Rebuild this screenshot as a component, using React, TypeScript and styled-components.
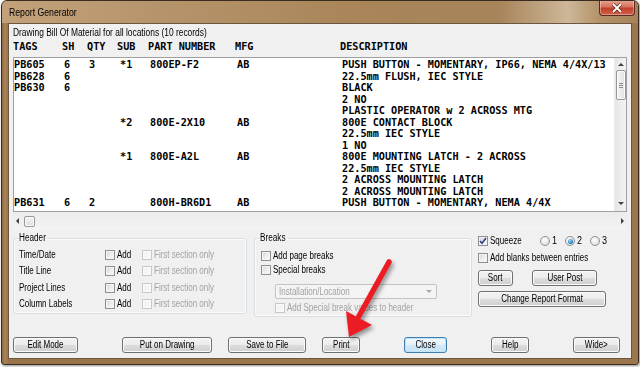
import React from "react";
import styled, { createGlobalStyle } from "styled-components";

const UI_FONT = `"Liberation Sans", Arial, sans-serif`;
const MONO = `"DejaVu Sans Mono", "Liberation Mono", monospace`;

const Global = createGlobalStyle`
  html, body { margin: 0; padding: 0; background: #fff; width: 640px; height: 367px; overflow: hidden; }
  body { font-family: ${UI_FONT}; font-size: 10px; color: #000; }
  * { box-sizing: border-box; }
`;

const Stage = styled.div`
  position: relative;
  width: 640px;
  height: 367px;
`;

const Win = styled.div`
  margin-left: 1px;
  width: 638px;
  height: 365px;
  border: 1px solid #3a2d20;
  border-radius: 6px 6px 3px 3px;
  background: linear-gradient(to right, #8f6a42 0px, #a8835a 3px, #9a7449 6px, #9c774d 100%);
  box-shadow: 1px 1px 3px rgba(0, 0, 0, 0.45);
  display: flex;
  flex-direction: column;
  overflow: hidden;
`;

const TitleBar = styled.div`
  height: 22px;
  flex: none;
  display: flex;
  align-items: flex-start;
  background: linear-gradient(
    to right,
    #c3a27b 0%,
    #b6946b 25%,
    #a98559 55%,
    #a7845a 78%,
    #cdb798 89%,
    #b39268 94%,
    #a7835a 100%
  );
`;

const TitleCell = styled.div`
  flex: 1;
  padding-left: 7px;
`;

const Narrow = styled.span<{ $sx?: number; $origin?: string }>`
  display: inline-block;
  white-space: nowrap;
  transform: scaleX(${(p) => p.$sx ?? 0.8});
  transform-origin: ${(p) => p.$origin ?? "0 50%"};
`;

const TitleText = styled(Narrow)`
  font: 11px/22px ${UI_FONT};
  color: #000;
`;

const CloseBtn = styled.div`
  width: 36px;
  height: 16px;
  margin-right: 3px;
  margin-top: -1px;
  border: 1px solid #5a2a1e;
  border-top: none;
  border-radius: 0 0 4px 4px;
  background: linear-gradient(to bottom, #e8a796 0%, #d9725c 45%, #c2402a 55%, #d0604a 100%);
  box-shadow: inset 0 0 0 1px rgba(255, 255, 255, 0.35);
  display: flex;
  align-items: center;
  justify-content: center;
`;

const Client = styled.div`
  flex: 1;
  margin: 0 6px 5px 6px;
  background: #f0f0f0;
  border: 1px solid #6b5640;
  display: flex;
  flex-direction: column;
  padding: 3px 4px 5px 4px;
`;

const Caption = styled.div`
  font: 10px/11px ${UI_FONT};
  color: #000;
  height: 11px;
`;

const MonoGrid = styled.div<{ $cols: string }>`
  display: grid;
  grid-template-columns: ${(p) => p.$cols};
  font-family: ${MONO};
  font-weight: bold;
  font-size: 10.2px;
  white-space: pre;
  color: #000;
`;

const HeaderRow = styled(MonoGrid)`
  margin-top: 2px;
  height: 12px;
  line-height: 13px;
`;

const ListBox = styled.div`
  margin-top: 5px;
  height: 155px;
  display: flex;
  border: 1px solid #a0a0a0;
  background: #fff;
`;

const ListText = styled.div`
  flex: 1;
  overflow: hidden;
  padding-top: 1px;
`;

const DataRow = styled(MonoGrid)`
  height: 11.5px;
  line-height: 11.5px;
`;

const VScroll = styled.div`
  width: 12px;
  flex: none;
  background: linear-gradient(to right, #e6e6e6, #f3f3f3);
  border-left: 1px solid #ececec;
  display: flex;
  flex-direction: column;
  align-items: center;
  padding: 5px 0 6px 0;
`;

const Arrow = styled.div<{ $dir: "up" | "down" | "left" | "right" }>`
  width: 0;
  height: 0;
  flex: none;
  ${(p) =>
    p.$dir === "up"
      ? "border-left: 3px solid transparent; border-right: 3px solid transparent; border-bottom: 3px solid #404040;"
      : p.$dir === "down"
      ? "border-left: 3px solid transparent; border-right: 3px solid transparent; border-top: 3px solid #404040;"
      : p.$dir === "left"
      ? "border-top: 3px solid transparent; border-bottom: 3px solid transparent; border-right: 3px solid #404040;"
      : "border-top: 3px solid transparent; border-bottom: 3px solid transparent; border-left: 3px solid #404040;"}
`;

const VThumb = styled.div`
  width: 10px;
  height: 30px;
  margin-top: 4px;
  border: 1px solid #979797;
  border-radius: 2px;
  background: linear-gradient(to right, #f4f4f4, #e2e2e2);
  box-shadow: inset 0 0 0 1px #fbfbfb;
  display: flex;
  flex-direction: column;
  align-items: center;
  justify-content: center;
  gap: 1px;
`;

const Grip = styled.div`
  width: 4px;
  height: 1px;
  background: #8c8c8c;
`;

const Spacer = styled.div`
  flex: 1;
`;

const HScroll = styled.div`
  height: 18px;
  flex: none;
  background: linear-gradient(to bottom, #ececec, #f4f4f4);
  display: flex;
  align-items: center;
  padding: 0 3px 0 3px;
`;

const HThumb = styled.div`
  width: 11px;
  height: 11px;
  margin-left: 5px;
  border: 1px solid #979797;
  border-radius: 2px;
  background: linear-gradient(to bottom, #f4f4f4, #dedede);
  box-shadow: inset 0 0 0 1px #fbfbfb;
`;

const Lower = styled.div`
  margin-top: 2px;
  display: grid;
  grid-template-columns: 234px 218px 149px;
  column-gap: 6.5px;
  align-items: start;
`;

const Group = styled.fieldset<{ $h: number }>`
  margin: 0;
  min-width: 0;
  height: ${(p) => p.$h}px;
  border: 1px solid #d5dfe5;
  border-radius: 3px;
  padding: 0 5px;
  box-shadow: inset 0 0 0 1px rgba(255, 255, 255, 0.7);
`;

const Legend = styled.legend<{ $w: number }>`
  padding: 0 1px;
  margin-left: -1px;
  width: ${(p) => p.$w}px;
  font: 10px/12px ${UI_FONT};
  color: #000;
  overflow: visible;
  white-space: nowrap;
`;

const HeaderGrid = styled.div`
  padding-top: 3px;
  display: grid;
  grid-template-columns: 86px 37px 1fr;
  grid-auto-rows: 16.33px;
  align-items: center;
`;

const Label = styled(Narrow)<{ $dim?: boolean }>`
  font: 10px/12px ${UI_FONT};
  color: ${(p) => (p.$dim ? "#a2a2a2" : "#000")};
`;

const CheckWrap = styled.label`
  display: flex;
  align-items: center;
  gap: 2px;
  height: 14px;
`;

const Box = styled.span<{ $disabled?: boolean }>`
  width: 10px;
  height: 10px;
  flex: none;
  border: 1px solid ${(p) => (p.$disabled ? "#c7c7c7" : "#8e8f8f")};
  background: ${(p) =>
    p.$disabled ? "#f5f5f5" : "linear-gradient(135deg, #d3d5d8 0%, #eeeeee 55%, #fbfbfb 100%)"};
  box-shadow: inset 0 0 0 1px ${(p) => (p.$disabled ? "#fafafa" : "#f4f4f4")};
  display: flex;
  align-items: center;
  justify-content: center;
`;

const RadioCircle = styled.span`
  width: 10px;
  height: 10px;
  flex: none;
  border-radius: 50%;
  border: 1px solid #8e8f8f;
  background: radial-gradient(circle at 40% 35%, #fefefe 0%, #e6e6e6 60%, #cfcfcf 100%);
  display: flex;
  align-items: center;
  justify-content: center;
`;

const RadioDot = styled.span`
  width: 5px;
  height: 5px;
  border-radius: 50%;
  background: radial-gradient(circle at 40% 35%, #a9dbf6 0%, #2c8ad0 55%, #14508a 100%);
`;

const BreaksCol = styled.div`
  padding: 5px 0 0 1px;
  display: flex;
  flex-direction: column;
`;

const Select = styled.div`
  margin: 7px 0 0 14px;
  width: 162px;
  height: 15px;
  border: 1px solid #c3c3c3;
  background: #f4f4f4;
  border-radius: 2px;
  display: flex;
  align-items: center;
  justify-content: space-between;
  padding: 0 4px 0 3px;
`;

const SmallTri = styled.span`
  width: 0;
  height: 0;
  border-left: 3px solid transparent;
  border-right: 3px solid transparent;
  border-top: 3px solid #a8a8a8;
`;

const Indented = styled.div<{ $top: number; $left: number }>`
  margin-top: ${(p) => p.$top}px;
  margin-left: ${(p) => p.$left}px;
`;

const RightCol = styled.div`
  padding-top: 2px;
  display: flex;
  flex-direction: column;
`;

const SqueezeRow = styled.div`
  display: grid;
  grid-template-columns: 62px 25px 25px 25px;
  align-items: center;
  height: 14px;
`;

const ButtonRow = styled.div<{ $top: number }>`
  margin-top: ${(p) => p.$top}px;
  display: flex;
  gap: 19px;
`;

const Btn = styled.div<{ $w: number; $gap?: number; $def?: boolean }>`
  width: ${(p) => p.$w}px;
  height: 16px;
  flex: none;
  margin-left: ${(p) => p.$gap ?? 0}px;
  border: 1px solid ${(p) => (p.$def ? "#3c7fb1" : "#707070")};
  border-radius: 3px;
  background: ${(p) =>
    p.$def
      ? "linear-gradient(to bottom, #f1f8fd 0%, #e4f2fb 50%, #d2e9f8 51%, #c8e3f6 100%)"
      : "linear-gradient(to bottom, #f3f3f3 0%, #ebebeb 50%, #dddddd 51%, #cfcfcf 100%)"};
  box-shadow: inset 0 0 0 1px ${(p) => (p.$def ? "#bfe4f8" : "#fbfbfb")};
  font: 10px/14px ${UI_FONT};
  color: #000;
  display: flex;
  justify-content: center;
  overflow: visible;
`;

const BtnText = styled(Narrow)`
  line-height: 14px;
`;

const BottomBar = styled.div`
  margin-top: auto;
  display: flex;
`;

const ArrowSvg = styled.svg`
  position: absolute;
  left: 0;
  top: 0;
  pointer-events: none;
  filter: drop-shadow(2px 3px 2px rgba(0, 0, 0, 0.4));
`;

type Row = [string, string, string, string, string, string, string];

const rows: Row[] = [
  ["PB605", "6", "3", "*1", "800EP-F2", "AB", "PUSH BUTTON - MOMENTARY, IP66, NEMA 4/4X/13"],
  ["PB628", "6", "", "", "", "", "22.5mm FLUSH, IEC STYLE"],
  ["PB630", "6", "", "", "", "", "BLACK"],
  ["", "", "", "", "", "", "2 NO"],
  ["", "", "", "", "", "", "PLASTIC OPERATOR w 2 ACROSS MTG"],
  ["", "", "", "*2", "800E-2X10", "AB", "800E CONTACT BLOCK"],
  ["", "", "", "", "", "", "22.5mm IEC STYLE"],
  ["", "", "", "", "", "", "1 NO"],
  ["", "", "", "*1", "800E-A2L", "AB", "800E MOUNTING LATCH - 2 ACROSS"],
  ["", "", "", "", "", "", "22.5mm IEC STYLE"],
  ["", "", "", "", "", "", "2 ACROSS MOUNTING LATCH"],
  ["", "", "", "", "", "", "2 ACROSS MOUNTING LATCH"],
  ["PB631", "6", "2", "", "800H-BR6D1", "AB", "PUSH BUTTON - MOMENTARY, NEMA 4/4X"],
];

const headerCols = "49px 25px 30px 31px 87px 105px 1fr";
const dataCols = "50px 25px 31px 30px 87px 105px 1fr";

const Check: React.FC<{ label: string; disabled?: boolean; checked?: boolean }> = ({
  label,
  disabled,
  checked,
}) => (
  <CheckWrap>
    <Box $disabled={disabled}>
      {checked && (
        <svg width="8" height="8" viewBox="0 0 8 8">
          <path d="M1 4 L3 6.3 L7 1" fill="none" stroke="#2b3f86" strokeWidth="1.6" />
        </svg>
      )}
    </Box>
    <Label $dim={disabled}>{label}</Label>
  </CheckWrap>
);

const Radio: React.FC<{ label: string; on?: boolean }> = ({ label, on }) => (
  <CheckWrap>
    <RadioCircle>{on && <RadioDot />}</RadioCircle>
    <Label $sx={0.9}>{label}</Label>
  </CheckWrap>
);

const Button: React.FC<{ w: number; gap?: number; def?: boolean; children: React.ReactNode }> = ({
  w,
  gap,
  def,
  children,
}) => (
  <Btn $w={w} $gap={gap} $def={def}>
    <BtnText $origin="50% 50%">{children}</BtnText>
  </Btn>
);

export default function App() {
  return (
    <Stage>
      <Global />
      <Win>
        <TitleBar>
          <TitleCell>
            <TitleText $sx={0.79}>Report Generator</TitleText>
          </TitleCell>
          <CloseBtn>
            <svg width="12" height="10" viewBox="0 0 12 10">
              <path d="M2 1 L10 9 M10 1 L2 9" stroke="#5a2418" strokeWidth="3.2" />
              <path d="M2 1 L10 9 M10 1 L2 9" stroke="#ffffff" strokeWidth="1.8" />
            </svg>
          </CloseBtn>
        </TitleBar>
        <Client>
          <Caption>
            <Narrow $sx={0.84}>Drawing Bill Of Material for all locations (10 records)</Narrow>
          </Caption>
          <HeaderRow $cols={headerCols}>
            <span>TAGS</span>
            <span>SH</span>
            <span>QTY</span>
            <span>SUB</span>
            <span>PART NUMBER</span>
            <span>MFG</span>
            <span>DESCRIPTION</span>
          </HeaderRow>
          <ListBox>
            <ListText>
              {rows.map((r, i) => (
                <DataRow key={i} $cols={dataCols}>
                  {r.map((c, j) => (
                    <span key={j}>{c}</span>
                  ))}
                </DataRow>
              ))}
            </ListText>
            <VScroll>
              <Arrow $dir="up" />
              <VThumb>
                <Grip />
                <Grip />
                <Grip />
              </VThumb>
              <Spacer />
              <Arrow $dir="down" />
            </VScroll>
          </ListBox>
          <HScroll>
            <Arrow $dir="left" />
            <HThumb />
            <Spacer />
            <Arrow $dir="right" />
          </HScroll>
          <Lower>
            <Group $h={82}>
              <Legend $w={29}>
                <Narrow $sx={0.82}>Header</Narrow>
              </Legend>
              <HeaderGrid>
                {["Time/Date", "Title Line", "Project Lines", "Column Labels"].map((t) => (
                  <React.Fragment key={t}>
                    <Label>{t}</Label>
                    <Check label="Add" />
                    <Check label="First section only" disabled />
                  </React.Fragment>
                ))}
              </HeaderGrid>
            </Group>
            <Group $h={85}>
              <Legend $w={29}>
                <Narrow $sx={0.82}>Breaks</Narrow>
              </Legend>
              <BreaksCol>
                <Check label="Add page breaks" />
                <Check label="Special breaks" />
                <Select>
                  <Label $dim>Installation/Location</Label>
                  <SmallTri />
                </Select>
                <Indented $top={2} $left={14}>
                  <Check label="Add Special break values to header" disabled />
                </Indented>
              </BreaksCol>
            </Group>
            <RightCol>
              <SqueezeRow>
                <Check label="Squeeze" checked />
                <Radio label="1" />
                <Radio label="2" on />
                <Radio label="3" />
              </SqueezeRow>
              <Indented $top={3} $left={0}>
                <Check label="Add blanks between entries" />
              </Indented>
              <ButtonRow $top={5}>
                <Button w={35}>Sort</Button>
                <Button w={65}>User Post</Button>
              </ButtonRow>
              <ButtonRow $top={5}>
                <Button w={128}>Change Report Format</Button>
              </ButtonRow>
            </RightCol>
          </Lower>
          <BottomBar>
            <Button w={65}>Edit Mode</Button>
            <Button w={90} gap={44}>Put on Drawing</Button>
            <Button w={78} gap={16}>Save to File</Button>
            <Button w={38} gap={16}>Print</Button>
            <Button w={43} gap={44} def>Close</Button>
            <Button w={38} gap={44}>Help</Button>
            <Button w={47} gap={44}>Wide&gt;</Button>
          </BottomBar>
        </Client>
      </Win>
      <ArrowSvg width="640" height="367" viewBox="0 0 640 367">
        <line x1="389" y1="262" x2="359" y2="316" stroke="#ec1c24" strokeWidth="5.5" strokeLinecap="round" />
        <polygon points="349,337 346,311 372,325" fill="#ec1c24" />
      </ArrowSvg>
    </Stage>
  );
}
